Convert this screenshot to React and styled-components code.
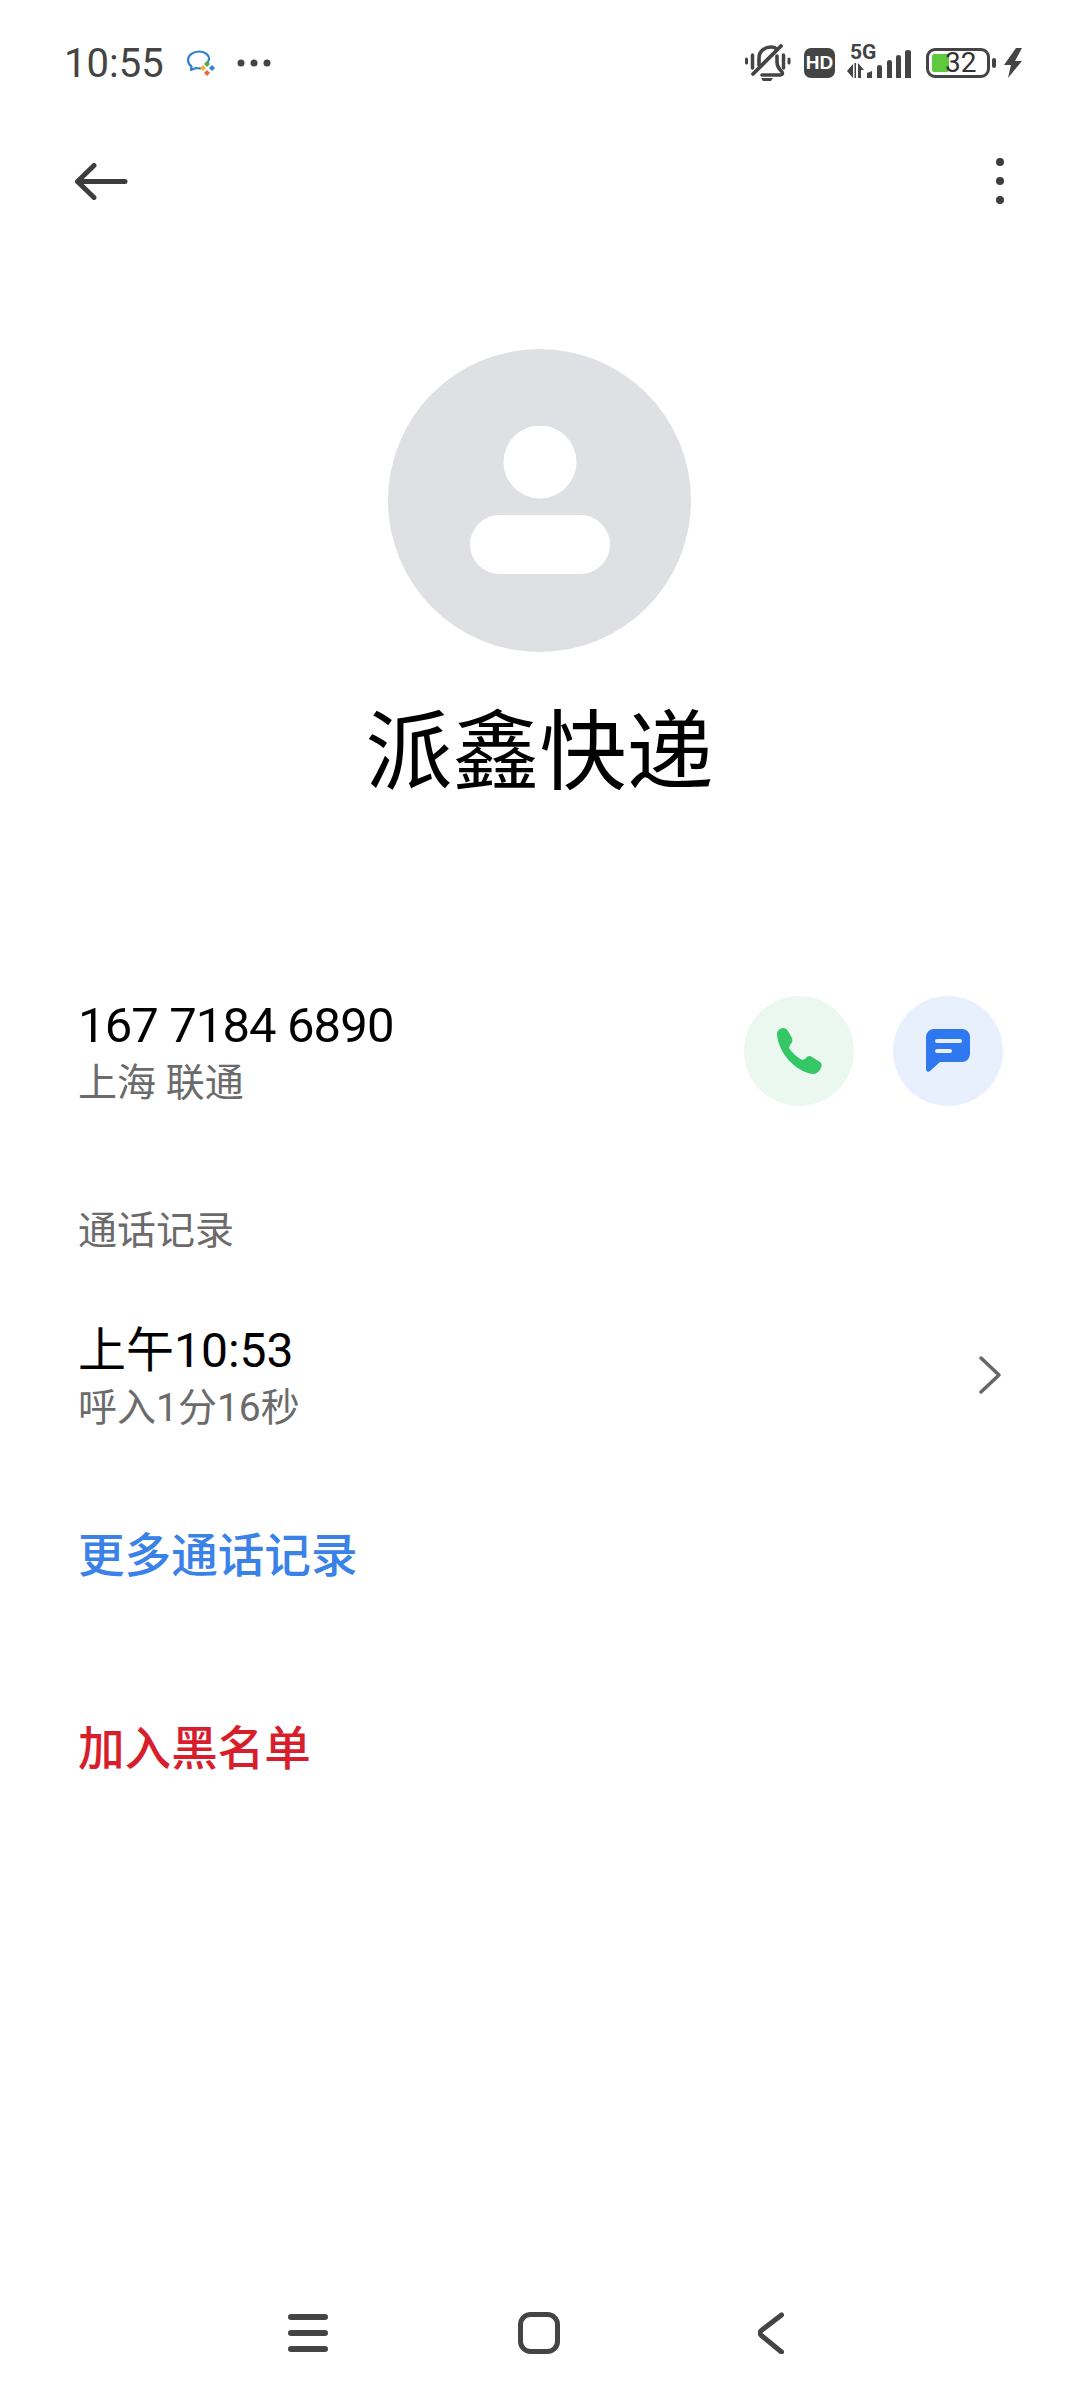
import React from 'react'
import styled, { createGlobalStyle } from 'styled-components'

const Global = createGlobalStyle`
  html, body { margin: 0; padding: 0; background: #fff; }
  * { box-sizing: border-box; }
`

const cjk = `Roboto, "Noto Sans CJK SC", sans-serif`

const Page = styled.div`
  width: 1080px;
  height: 2400px;
  display: flex;
  flex-direction: column;
  background: #fff;
  overflow: hidden;
`
const StatusBar = styled.div`
  height: 90px;
  padding: 36px 58px 0 64px;
  display: flex;
  justify-content: space-between;
  align-items: flex-start;
  color: #444;
`
const StatusLeft = styled.div`
  height: 54px;
  display: flex;
  align-items: center;
`
const Clock = styled.span`
  width: 122px;
  padding-top: 2px;
  font: 400 40px/54px Roboto, sans-serif;
  color: #444;
`
const DotsIcon = styled.svg`
  margin-left: 21px;
`
const StatusRight = styled.div`
  height: 54px;
  display: flex;
  align-items: center;
`
const HdBadge = styled.span`
  width: 31px;
  height: 30px;
  margin: 0 12px 0 13px;
  border-radius: 7px;
  background: #444;
  color: #fff;
  font: 700 19px/30px "Liberation Sans", sans-serif;
  text-align: center;
`
const SignalWrap = styled.div`
  position: relative;
  width: 64px;
  height: 32px;
  margin: 0 15px 2px 0;
`
const FiveG = styled.span`
  position: absolute;
  left: 3px;
  top: -5px;
  font: 700 21px/22px Roboto, sans-serif;
  color: #444;
`
const SignalBars = styled.svg`
  position: absolute;
  left: 0;
  bottom: 0;
`
const Battery = styled.div`
  position: relative;
  width: 64px;
  height: 30px;
  border: 3px solid #444;
  border-radius: 9px;
  padding: 3px;
`
const BatteryFill = styled.div`
  height: 100%;
  border-radius: 2px;
  background: #5fc93e;
`
const BatteryText = styled.span`
  position: absolute;
  left: 16px;
  top: -4px;
  font: 400 28px/31px Roboto, sans-serif;
  color: #333;
`
const BatteryNub = styled.div`
  width: 4px;
  height: 10px;
  margin: 0 8px 0 2px;
  border-radius: 2px;
  background: #444;
`
const NavBar = styled.div`
  height: 182px;
  padding: 0 75px 0 75px;
  display: flex;
  justify-content: space-between;
  align-items: center;
`
const Hero = styled.div`
  margin-top: 77px;
  padding-right: 1px;
  display: flex;
  flex-direction: column;
  align-items: center;
`
const Avatar = styled.div`
  width: 303px;
  height: 303px;
  border-radius: 50%;
  background: #dfe0e4;
  display: flex;
  align-items: center;
  justify-content: center;
`
const Name = styled.h1`
  margin: 43px 0 0;
  font: 400 87px/100px "Noto Sans CJK SC", sans-serif;
  color: #000;
`
const ContactRow = styled.div`
  margin-top: 201px;
  padding: 0 77px 0 78px;
  display: flex;
  justify-content: space-between;
  align-items: flex-start;
`
const PrimaryText = styled.div`
  font: 400 ${p => p.$size}px/60px ${cjk};
  letter-spacing: ${p => p.$tight || 0}px;
  color: #000;
`
const SecondaryText = styled.div`
  font: 400 39px/54px ${cjk};
  color: #6b6b6b;
`
const Actions = styled.div`
  display: flex;
  gap: 39px;
`
const RoundButton = styled.button`
  width: 110px;
  height: 110px;
  padding: 0;
  border: 0;
  border-radius: 50%;
  background: ${p => p.$bg};
  display: flex;
  align-items: center;
  justify-content: center;
`
const SectionLabel = styled.div`
  margin-top: 96px;
  padding-left: 78px;
  font: 400 39px/50px ${cjk};
  color: #6b6b6b;
`
const CallRow = styled.div`
  margin-top: 65px;
  padding: 0 78px 0 78px;
  display: flex;
  justify-content: space-between;
  align-items: center;
`
const Chevron = styled.svg`
  margin-bottom: 6px;
`
const LinkText = styled.div`
  padding-left: 78px;
  margin-top: ${p => p.$top}px;
  font: 500 46.6px/60px ${cjk};
  color: ${p => p.$color};
`
const SystemNav = styled.div`
  margin-top: auto;
  height: 88px;
  padding: 0 296px 0 288px;
  display: flex;
  justify-content: space-between;
  align-items: flex-start;
`
const HomeIcon = styled.svg`
  margin-right: 8px;
`

const MutedBell = () => (
  <svg width="46" height="38" viewBox="0 0 46 38" fill="none" stroke="#444" strokeLinecap="round" strokeLinejoin="round">
    <path d="M1.500 15v4M44 15v4" strokeWidth="3" />
    <path d="M7.500 11v13M38.500 11v13" strokeWidth="3.500" />
    <path d="M14 21v-7C14 7 20 3 26 3c2 0 4 .5 5 1.500M32 12v6c0 4 2 7 5 10 1 2 0 3-2 3H17" strokeWidth="3.600" />
    <path d="M36 2 8 30" strokeWidth="3.800" />
    <path d="M16 34h12l-2 3h-8z" fill="#444" stroke="none" />
  </svg>
)

const PhoneIcon = () => (
  <svg width="46" height="46" viewBox="0 0 46 46" fill="#35c766">
    <path d="M1 6C1 3 4 0 7 0c2 0 4 1 5 3l4 7c1 3 0 5-2 7l-1 3c3 5 8 9 13 12l3-1c2-3 5-4 7-2l8 5c2 1 2 4 1 6-2 4-5 6-8 6C20 44 2 25 1 6z" />
  </svg>
)

const MessageIcon = () => (
  <svg width="44" height="44" viewBox="0 0 44 44">
    <path d="M8 0h28a8 8 0 0 1 8 8v17a8 8 0 0 1-8 8H14L4 42c-2 1.500-4 .5-4-2V8a8 8 0 0 1 8-8z" fill="#2f78f0" />
    <path d="M11 12h23M11 22h13" stroke="#e8f0fe" strokeWidth="4" strokeLinecap="round" />
  </svg>
)

export default function App() {
  return (
    <Page>
      <Global />
      <StatusBar>
        <StatusLeft>
          <Clock>10:55</Clock>
          <svg width="30" height="26" viewBox="0 0 30 26" fill="none">
            <path d="M21 13c1-1 2-2 2-4 0-4.500-4.500-7.500-10-7.500S2 5 2 10c0 3 1.500 5 3.500 6.500L5 20l5-2c2 .5 3 .5 5 .3" stroke="#2f80d0" strokeWidth="2.200" strokeLinejoin="round" />
            <path d="M21 11l3 3-3 3-3-3z" fill="#4fa84a" />
            <path d="M17 15l3 3-3 3-3-3z" fill="#f0b030" />
            <path d="M26 15l3 3-3 3-3-3z" fill="#2f80d0" />
            <path d="M21 20l3 3-3 3-3-3z" fill="#e06a3a" />
          </svg>
          <DotsIcon width="36" height="8" viewBox="0 0 36 8" fill="#444">
            <circle cx="4" cy="4" r="3.500" />
            <circle cx="17" cy="4" r="3.500" />
            <circle cx="30" cy="4" r="3.500" />
          </DotsIcon>
        </StatusLeft>
        <StatusRight>
          <MutedBell />
          <HdBadge>HD</HdBadge>
          <SignalWrap>
            <FiveG>5G</FiveG>
            <SignalBars width="64" height="28" viewBox="0 0 64 28" fill="#444">
              <path d="M6 14v14L0 21zM9 13v15h-1.500V13zM11 13l6 7h-3v8h-3z" />
              <path d="M20 28v-5l5-2v7zM30 28v-11q0-2 2.500-2t2.500 2v11zM40 28V12q0-2 2.500-2t2.500 2v16zM49 28V7q0-2 2.500-2T54 7v21zM58 28V2q0-2 3-2t3 2v26z" />
            </SignalBars>
          </SignalWrap>
          <Battery>
            <BatteryFill style={{ width: '33%' }} />
            <BatteryText>32</BatteryText>
          </Battery>
          <BatteryNub />
          <svg width="18" height="30" viewBox="0 0 18 30" fill="#444">
            <path d="M12 0 0 17h7L4 30l14-17h-7l7-13z" />
          </svg>
        </StatusRight>
      </StatusBar>

      <NavBar>
        <svg width="53" height="37" viewBox="0 0 53 37" fill="none" stroke="#3d3d3d" strokeWidth="5" strokeLinecap="round" strokeLinejoin="round">
          <path d="M19 2.500 2.500 18.500 19 34.500M2.500 18.500H50" />
        </svg>
        <svg width="10" height="48" viewBox="0 0 10 48" fill="#3d3d3d">
          <circle cx="5" cy="5" r="4" />
          <circle cx="5" cy="24" r="4" />
          <circle cx="5" cy="43" r="4" />
        </svg>
      </NavBar>

      <Hero>
        <Avatar>
          <svg width="140" height="150" viewBox="0 0 140 150" fill="#fff">
            <circle cx="70" cy="36" r="36.500" />
            <rect x="0" y="89" width="140" height="59" rx="29.500" />
          </svg>
        </Avatar>
        <Name>派鑫快递</Name>
      </Hero>

      <ContactRow>
        <div>
          <PrimaryText $size={49} $tight={-0.9}>167 7184 6890</PrimaryText>
          <SecondaryText>上海 联通</SecondaryText>
        </div>
        <Actions>
          <RoundButton $bg="#eaf8f0"><PhoneIcon /></RoundButton>
          <RoundButton $bg="#e8f0fe"><MessageIcon /></RoundButton>
        </Actions>
      </ContactRow>

      <SectionLabel>通话记录</SectionLabel>

      <CallRow>
        <div>
          <PrimaryText $size={48}>上午10:53</PrimaryText>
          <SecondaryText>呼入1分16秒</SecondaryText>
        </div>
        <Chevron width="24" height="40" viewBox="0 0 24 40" fill="none" stroke="#666" strokeWidth="3.500" strokeLinecap="round" strokeLinejoin="round">
          <path d="M3 3l18 17L3 37" />
        </Chevron>
      </CallRow>

      <LinkText $top={91} $color="#3a82e8">更多通话记录</LinkText>
      <LinkText $top={133} $color="#d81e2c">加入黑名单</LinkText>

      <SystemNav>
        <svg width="40" height="42" viewBox="0 0 40 42" fill="#444">
          <rect x="0" y="2" width="40" height="6" rx="3" />
          <rect x="0" y="18" width="40" height="6" rx="3" />
          <rect x="0" y="34" width="40" height="6" rx="3" />
        </svg>
        <HomeIcon width="42" height="42" viewBox="0 0 42 42" fill="none" stroke="#444" strokeWidth="5">
          <rect x="2.500" y="2.500" width="37" height="37" rx="10" />
        </HomeIcon>
        <svg width="26" height="42" viewBox="0 0 26 42" fill="none" stroke="#444" strokeWidth="5" strokeLinecap="round" strokeLinejoin="round">
          <path d="M23.500 3 4 18c-2.500 2-2.500 4 0 6l19.500 16" />
        </svg>
      </SystemNav>
    </Page>
  )
}
